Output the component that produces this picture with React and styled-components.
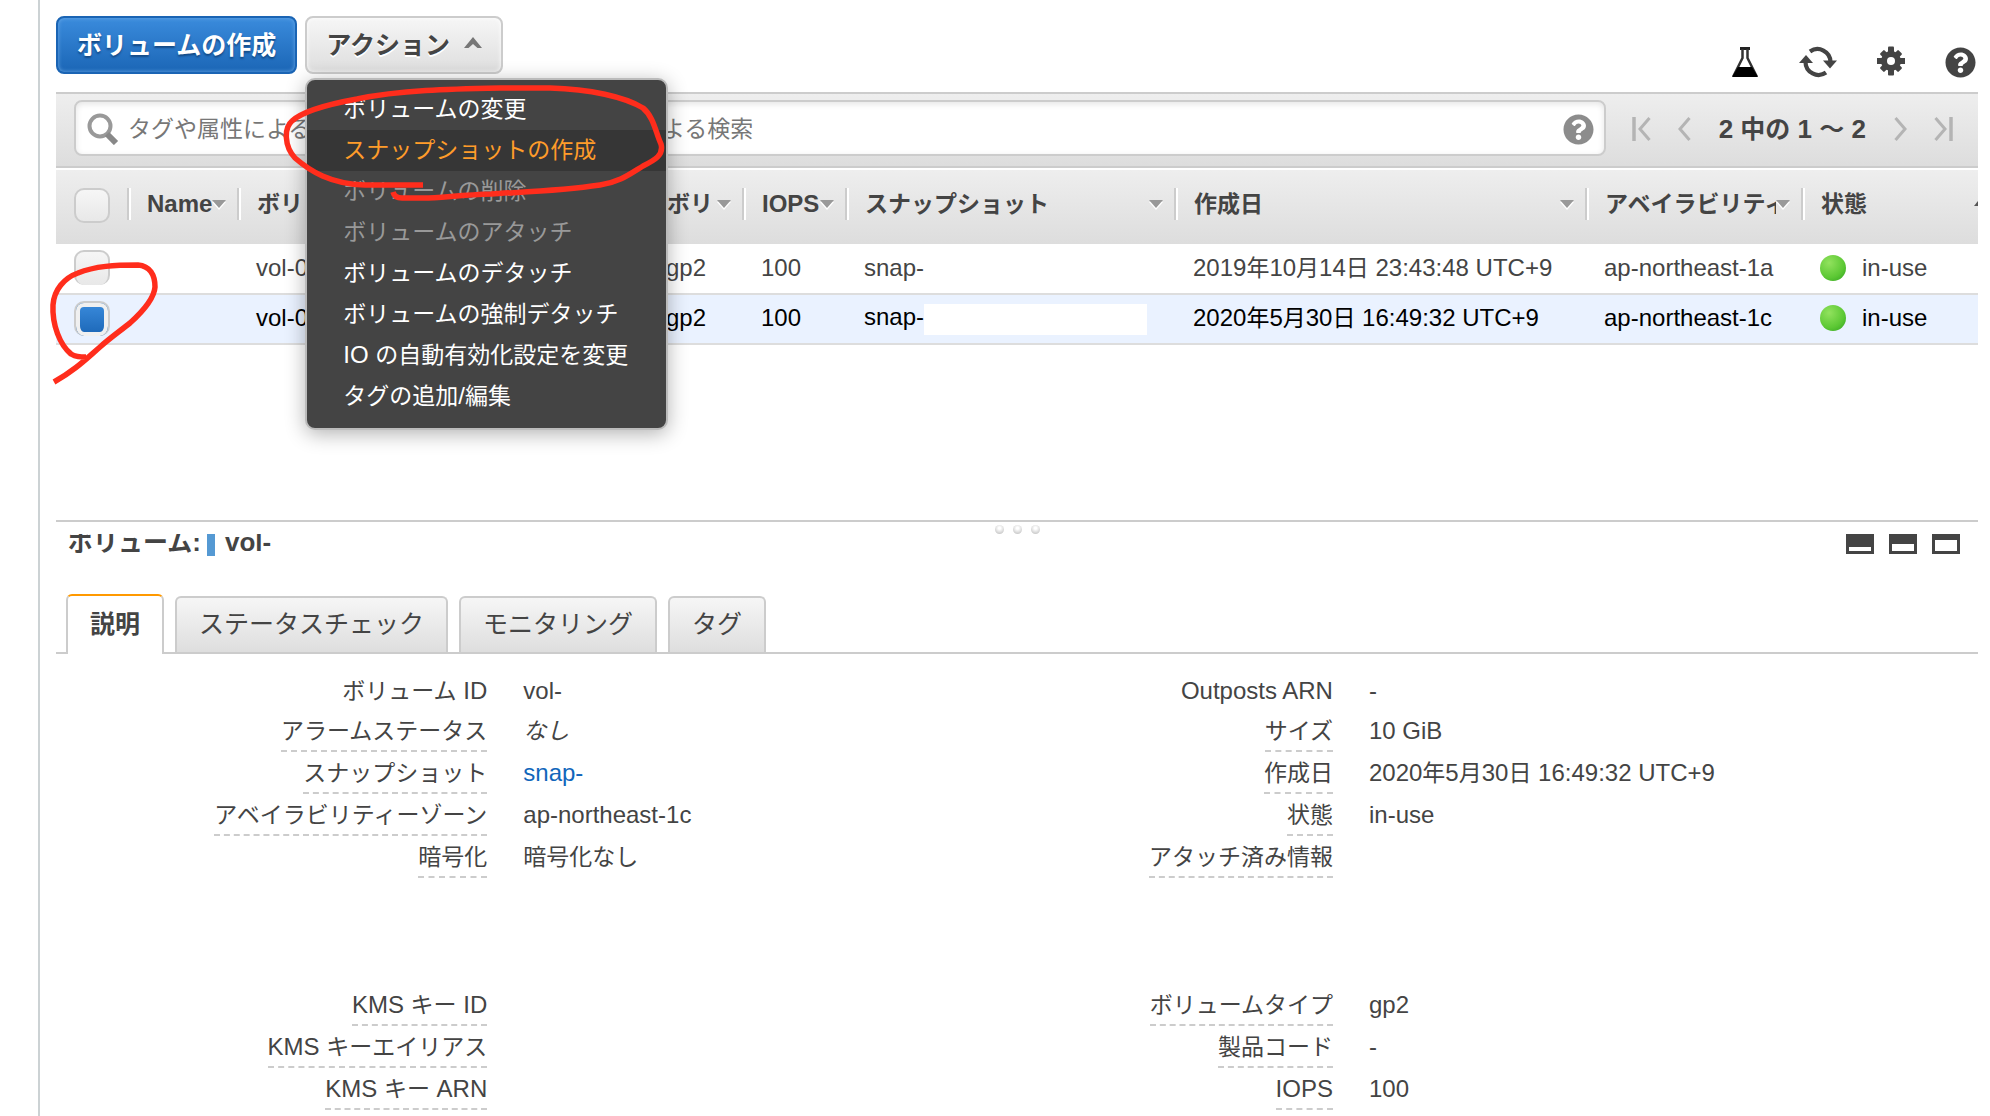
import React from "react";
import styled, { createGlobalStyle, css } from "styled-components";
import { FaQuestionCircle } from "react-icons/fa";

const GlobalStyle = createGlobalStyle`
  *, *::before, *::after { box-sizing: border-box; }
  body {
    margin: 0;
    background: #fff;
    color: #444;
    font-family: "Liberation Sans", "Noto Sans CJK JP", sans-serif;
    font-size: 24px;
  }
  button, input { font-family: inherit; }
`;

const Ja = styled.span`
  font-size: ${(p) => (p.$large ? 25 : 23)}px;
`;

/* Kana and kanji are set one pixel smaller than the Latin text beside them. */
function Text({ children, large }) {
  return children
    .split(/([\u3000-\u9fff\uff00-\uffef]+)/)
    .filter(Boolean)
    .map((run, i) =>
      /[\u3000-\u9fff\uff00-\uffef]/.test(run) ? (
        <Ja key={i} $large={large}>{run}</Ja>
      ) : (
        run
      )
    );
}

const Page = styled.div`
  position: relative;
  min-height: 100vh;
  padding-left: 38px;
  overflow: hidden;
`;

const Main = styled.main`
  min-height: 100vh;
  padding: 0 12px 0 16px;
  border-left: 2px solid #ccd2d4;
`;

const Toolbar = styled.header`
  display: flex;
  justify-content: space-between;
  height: 92px;
  padding-top: 16px;
`;

const ButtonGroup = styled.div`
  display: flex;
  gap: 8px;
`;

const Button = styled.button`
  display: flex;
  align-items: center;
  gap: 14px;
  height: 58px;
  padding: 0 19px 4px;
  border: 2px solid #ccc;
  border-radius: 8px;
  background: linear-gradient(#f6f6f6, #dedede);
  box-shadow: inset 0 0 4px #fff;
  color: #444;
  font-size: 26px;
  font-weight: bold;
  text-shadow: 0 2px 0 #fff;
  ${(p) =>
    p.$primary &&
    css`
      border-color: #1a64b4;
      background: linear-gradient(#3a8bdc, #1b66b6);
      box-shadow: inset 0 0 4px #6aa9e6;
      color: #fff;
      text-shadow: 0 2px 2px #134a86;
    `}
`;

const MenuAnchor = styled.div`
  position: relative;
`;

const Menu = styled.ul`
  position: absolute;
  z-index: 2;
  top: 62px;
  left: 0;
  width: 363px;
  margin: 0;
  padding: 9px 0 11px;
  border: 2px solid #bbb;
  border-radius: 10px;
  background: #444;
  box-shadow: 0 4px 20px rgba(0, 0, 0, 0.3);
  list-style: none;
`;

const MenuItem = styled.button`
  display: block;
  width: 100%;
  height: 41px;
  padding: 0 0 2px 36px;
  border: 0;
  background: ${(p) => (p.$active ? "#363636" : "transparent")};
  color: ${(p) => (p.$active ? "#ff9c2a" : "#fff")};
  font-size: 24px;
  line-height: 36px;
  text-align: left;
  white-space: nowrap;
  &:disabled { color: #999; }
`;

const Tools = styled.div`
  display: flex;
  align-items: flex-end;
  gap: 40px;
  height: 62px;
  padding-right: 2px;
`;

const IconButton = styled.button`
  display: flex;
  align-items: center;
  justify-content: center;
  padding: 0;
  border: 0;
  background: none;
  color: ${(p) => p.$color || "#444"};
`;

const FilterBar = styled.div`
  display: flex;
  align-items: flex-start;
  gap: 26px;
  height: 76px;
  padding: 6px 25px 0 18px;
  border: solid #ccc;
  border-width: 2px 0;
  background: linear-gradient(#eee, #ddd);
`;

const SearchBox = styled.label`
  display: flex;
  flex: 1;
  align-items: center;
  gap: 9px;
  height: 56px;
  padding: 2px 10px 0 11px;
  border: 2px solid #ccc;
  border-radius: 8px;
  background: #fff;
  box-shadow: inset 0 2px 6px #e4e4e4;
`;

const SearchInput = styled.input`
  flex: 1;
  min-width: 0;
  padding: 0;
  border: 0;
  outline: 0;
  background: transparent;
  font-size: 23px;
  &::placeholder { color: #777; opacity: 1; }
`;

const Pager = styled.nav`
  display: flex;
  align-items: center;
  gap: 26px;
  height: 58px;
`;

const PagerText = styled.span`
  margin: 0 2px;
  font-size: 26px;
  font-weight: bold;
  line-height: 36px;
  white-space: nowrap;
`;

const Table = styled.table`
  width: 100%;
  margin-top: 2px;
  border-collapse: collapse;
  table-layout: fixed;
`;

const HeadRow = styled.tr`
  height: 74px;
  background: linear-gradient(#eee, #ddd);
`;

const HeadCell = styled.th`
  padding: 18px 0 0;
  overflow: hidden;
  text-align: left;
  vertical-align: top;
`;

const HeadInner = styled.div`
  display: flex;
  align-items: center;
  height: 32px;
  padding: 0 ${(p) => (p.$last ? 0 : 11)}px 0 18px;
  border-left: 2px solid #ccc;
  box-shadow: inset 2px 0 0 #fff;
`;

const HeadLabel = styled.span`
  flex: 1;
  overflow: hidden;
  line-height: 32px;
  white-space: nowrap;
`;

const Row = styled.tr`
  height: 50px;
  border-bottom: 2px solid #ddd;
  background: ${(p) => (p.$selected ? "#eaf2ff" : "#fff")};
  color: ${(p) => (p.$selected ? "#000" : "#444")};
`;

const Cell = styled.td`
  padding: 0 0 2px 19px;
  line-height: 32px;
  white-space: nowrap;
`;

const CheckCell = styled.td`
  padding: ${(p) => (p.$head ? 18 : 6)}px 0 0 18px;
  line-height: 0;
  text-align: left;
  vertical-align: top;
`;

const Checkbox = styled.input`
  appearance: none;
  width: 36px;
  height: 35px;
  margin: 0;
  border: 2px solid #ccc;
  border-bottom-width: ${(p) => (p.$head ? 2 : 0)}px;
  border-radius: 10px;
  background: linear-gradient(#f6f6f6, #e8e8e8);
  &:checked {
    border-color: #ccc;
    box-shadow: inset 0 0 0 4px #f0f0f0;
    background: linear-gradient(#3a8bdc, #1b66b6);
  }
`;

const Redacted = styled.span`
  display: inline-block;
  width: 223px;
  height: 31px;
  background: #fff;
  vertical-align: middle;
`;

const Status = styled.span`
  display: flex;
  align-items: center;
  gap: 16px;
`;

const Dot = styled.span`
  width: 26px;
  height: 26px;
  border-radius: 50%;
  background: radial-gradient(circle at 35% 30%, #92e25e, #5cc834 60%, #2f9f20);
`;

const Splitter = styled.div`
  display: flex;
  justify-content: center;
  gap: 9px;
  height: 14px;
  margin-top: 175px;
  padding-top: 3px;
  border-top: 2px solid #ccc;
`;

const Grip = styled.span`
  width: 9px;
  height: 9px;
  border-radius: 50%;
  background: radial-gradient(circle at 50% 35%, #fff 15%, #ccc 75%);
`;

const PanelHead = styled.div`
  display: flex;
  justify-content: space-between;
  align-items: flex-start;
  height: 60px;
  padding: 0 18px 0 12px;
`;

const PanelTitle = styled.h2`
  display: flex;
  align-items: flex-start;
  height: 24px;
  margin: 0;
  overflow: hidden;
  font-size: 26px;
`;

const TitleText = styled.span`
  line-height: 16px;
`;

const Marker = styled.span`
  width: 8px;
  height: 22px;
  margin: 0 10px 0 6px;
  background: #5599d3;
`;

const WindowButtons = styled.div`
  display: flex;
  gap: 15px;
`;

const TabList = styled.div`
  display: flex;
  align-items: flex-end;
  gap: 11px;
  height: 60px;
  padding-left: 10px;
  border-bottom: 2px solid #ccc;
`;

const Tab = styled.button`
  height: 56px;
  padding: 0 22px 2px;
  border: 2px solid #ccc;
  border-bottom: 0;
  border-radius: 6px 6px 0 0;
  background: linear-gradient(#f6f6f6, #dedede);
  color: #444;
  font-size: 26px;
  line-height: 50px;
  ${(p) =>
    p.$active &&
    css`
      height: 60px;
      margin-bottom: -2px;
      border-top-color: #f90;
      background: #fff;
      font-weight: bold;
    `}
`;

const Details = styled.div`
  display: flex;
  padding-top: 18px;
`;

const DetailList = styled.dl`
  width: 44%;
  margin: 0;
`;

const DetailRow = styled.div`
  display: grid;
  grid-template-columns: 51% 1fr;
  align-items: start;
  column-gap: 36px;
  height: ${(p) => (p.$tall ? 148 : p.$plain ? 40 : 42)}px;
`;

const Term = styled.dt`
  justify-self: end;
  height: 40px;
  border-bottom: ${(p) => (p.$plain ? "0" : "2px dashed #ccc")};
  line-height: 38px;
  white-space: nowrap;
`;

const Value = styled.dd`
  margin: 0;
  line-height: 38px;
  white-space: nowrap;
`;

const Link = styled.a`
  color: #1166bb;
  text-decoration: none;
`;

const Marks = styled.svg`
  position: absolute;
  z-index: 3;
  top: 0;
  left: 0;
  pointer-events: none;
`;

const Svg = ({ w, h, children }) => (
  <svg width={w} height={h} viewBox={`0 0 ${w} ${h}`} aria-hidden="true">{children}</svg>
);

const FlaskIcon = () => (
  <Svg w={28} h={31}>
    <path d="M9 1.500h10" stroke="#222" strokeWidth="3" />
    <path d="M11.500 2v9L3 28h22L16.500 11V2" fill="none" stroke="#333" strokeWidth="2.500" />
    <path d="M7 20h14l6 10H1z" fill="#000" />
  </Svg>
);

const RefreshIcon = () => (
  <Svg w={38} h={32}>
    <path d="M11 5.500A13 13 0 0 1 31.500 16M27 26.500A13 13 0 0 1 6.500 16" fill="none" stroke="#444" strokeWidth="4.200" />
    <path d="M0 17L7 9l7 8zM24 14.500h14l-7 8z" fill="#444" />
  </Svg>
);

const GearIcon = () => (
  <Svg w={28} h={32}>
    <g fill="#444">
      {[0, 45, 90, 135].map((a) => (
        <rect key={a} x="11" y={a % 90 ? 2 : 0.5} width="6" height={a % 90 ? 26 : 29} rx="1" transform={`rotate(${a} 14 15)`} />
      ))}
      <circle cx="14" cy="15" r="10" />
    </g>
    <circle cx="14" cy="15" r="4" fill="#fff" />
  </Svg>
);

const SearchIcon = () => (
  <Svg w={32} h={32}>
    <circle cx="13" cy="13" r="10.500" fill="none" stroke="#999" strokeWidth="4" />
    <path d="M20 21l9 9" stroke="#888" strokeWidth="6" />
  </Svg>
);

const PageIcon = ({ back, end }) => (
  <Svg w={end ? 19 : 14} h={24}>
    <g transform={back ? `translate(${end ? 19 : 14} 0) scale(-1 1)` : undefined} fill="none" stroke="#b4b4b4" strokeWidth="3">
      <path d="M1.500 1l9.500 11-9.500 11" />
      {end && <path d="M17 0v24" strokeWidth="3.500" />}
    </g>
  </Svg>
);

const SortIcon = () => (
  <Svg w={14} h={12}>
    <path d="M0 4h14L7 12z" fill="#fff" />
    <path d="M0 2h14L7 10z" fill="#999" />
  </Svg>
);

const EdgeIcon = () => (
  <Svg w={4} h={6}>
    <path d="M0 5L4 0v5z" fill="#555" />
  </Svg>
);

const CaretIcon = () => (
  <Svg w={18} h={12}>
    <path d="M0 11L9 0l9 11h-4.500L9 7l-4.500 4z" fill="#777" />
  </Svg>
);

const WindowIcon = ({ top }) => (
  <Svg w={28} h={21}>
    <path fillRule="evenodd" fill="#444" d={`M0 0h28v20H0zM3 ${top}v${17 - top}h22V${top}z`} />
  </Svg>
);

const menuItems = [
  { label: "ボリュームの変更" },
  { label: "スナップショットの作成", active: true },
  { label: "ボリュームの削除", disabled: true },
  { label: "ボリュームのアタッチ", disabled: true },
  { label: "ボリュームのデタッチ" },
  { label: "ボリュームの強制デタッチ" },
  { label: "IO の自動有効化設定を変更" },
  { label: "タグの追加/編集" },
];

const columns = [
  { key: "name", label: "Name", width: 110 },
  { key: "id", label: "ボリ", width: 410 },
  { key: "type", label: "ボリ", width: 95 },
  { key: "iops", label: "IOPS", width: 103 },
  { key: "snapshot", label: "スナップショット", width: 329 },
  { key: "created", label: "作成日", width: 411 },
  { key: "zone", label: "アベイラビリティ", width: 216 },
  { key: "state", label: "状態" },
];

const volumes = [
  { created: "2019年10月14日 23:43:48 UTC+9", zone: "ap-northeast-1a" },
  { created: "2020年5月30日 16:49:32 UTC+9", zone: "ap-northeast-1c", selected: true },
];

const details = [
  [
    { term: "ボリューム ID", value: "vol-", plain: true },
    { term: "アラームステータス", value: <i><Text>なし</Text></i> },
    { term: "スナップショット", value: <Link href="#snapshot">snap-</Link> },
    { term: "アベイラビリティーゾーン", value: "ap-northeast-1c" },
    { term: "暗号化", value: "暗号化なし", tall: true },
    { term: "KMS キー ID" },
    { term: "KMS キーエイリアス" },
    { term: "KMS キー ARN" },
  ],
  [
    { term: "Outposts ARN", value: "-", plain: true },
    { term: "サイズ", value: "10 GiB" },
    { term: "作成日", value: "2020年5月30日 16:49:32 UTC+9" },
    { term: "状態", value: "in-use" },
    { term: "アタッチ済み情報", tall: true },
    { term: "ボリュームタイプ", value: "gp2" },
    { term: "製品コード", value: "-" },
    { term: "IOPS", value: "100" },
  ],
];

export default function App() {
  return (
    <Page>
      <GlobalStyle />
      <Main>
        <Toolbar>
          <ButtonGroup>
            <Button $primary><span><Text large>ボリュームの作成</Text></span></Button>
            <MenuAnchor>
              <Button aria-expanded="true"><span><Text large>アクション</Text></span><CaretIcon /></Button>
              <Menu>
                {menuItems.map((item) => (
                  <li key={item.label}>
                    <MenuItem $active={item.active} disabled={item.disabled}><Text>{item.label}</Text></MenuItem>
                  </li>
                ))}
              </Menu>
            </MenuAnchor>
          </ButtonGroup>
          <Tools>
            <IconButton aria-label="実験"><FlaskIcon /></IconButton>
            <IconButton aria-label="更新"><RefreshIcon /></IconButton>
            <IconButton aria-label="設定"><GearIcon /></IconButton>
            <IconButton aria-label="ヘルプ"><FaQuestionCircle size={31} /></IconButton>
          </Tools>
        </Toolbar>

        <FilterBar>
          <SearchBox>
            <SearchIcon />
            <SearchInput type="text" aria-label="検索" placeholder="タグや属性によるフィルター、または キーワードによる検索" />
            <IconButton $color="#8c8c8c" aria-label="検索のヘルプ"><FaQuestionCircle size={31} /></IconButton>
          </SearchBox>
          <Pager>
            <IconButton aria-label="最初"><PageIcon back end /></IconButton>
            <IconButton aria-label="前"><PageIcon back /></IconButton>
            <PagerText><Text large>2 中の 1 ～ 2</Text></PagerText>
            <IconButton aria-label="次"><PageIcon /></IconButton>
            <IconButton aria-label="最後"><PageIcon end /></IconButton>
          </Pager>
        </FilterBar>

        <Table>
          <colgroup>
            <col width="71" />
            {columns.map((c) => <col key={c.key} width={c.width} />)}
          </colgroup>
          <thead>
            <HeadRow>
              <CheckCell as="th" $head>
                <Checkbox $head type="checkbox" aria-label="すべて選択" />
              </CheckCell>
              {columns.map((c) => (
                <HeadCell key={c.key}>
                  <HeadInner $last={!c.width}>
                    <HeadLabel><Text>{c.label}</Text></HeadLabel>
                    {c.width ? <SortIcon /> : <EdgeIcon />}
                  </HeadInner>
                </HeadCell>
              ))}
            </HeadRow>
          </thead>
          <tbody>
            {volumes.map((v) => (
              <Row key={v.zone} $selected={v.selected}>
                <CheckCell>
                  <Checkbox type="checkbox" aria-label={v.zone} defaultChecked={v.selected} />
                </CheckCell>
                <Cell />
                <Cell>vol-0</Cell>
                <Cell>gp2</Cell>
                <Cell>100</Cell>
                <Cell>snap-{v.selected && <Redacted />}</Cell>
                <Cell><Text>{v.created}</Text></Cell>
                <Cell>{v.zone}</Cell>
                <Cell><Status><Dot />in-use</Status></Cell>
              </Row>
            ))}
          </tbody>
        </Table>

        <Splitter><Grip /><Grip /><Grip /></Splitter>
        <PanelHead>
          <PanelTitle>
            <TitleText><Text large>ボリューム:</Text></TitleText>
            <Marker />
            <TitleText>vol-</TitleText>
          </PanelTitle>
          <WindowButtons>
            <IconButton aria-label="最小化"><WindowIcon top={13} /></IconButton>
            <IconButton aria-label="半分"><WindowIcon top={10} /></IconButton>
            <IconButton aria-label="最大化"><WindowIcon top={6} /></IconButton>
          </WindowButtons>
        </PanelHead>

        <TabList role="tablist">
          {["説明", "ステータスチェック", "モニタリング", "タグ"].map((t, i) => (
            <Tab key={t} role="tab" aria-selected={i === 0} $active={i === 0}><Text large>{t}</Text></Tab>
          ))}
        </TabList>

        <Details>
          {details.map((list, i) => (
            <DetailList key={i}>
              {list.map((d) => (
                <DetailRow key={d.term} $plain={d.plain} $tall={d.tall}>
                  <Term $plain={d.plain}><Text>{d.term}</Text></Term>
                  <Value>{typeof d.value === "string" ? <Text>{d.value}</Text> : d.value}</Value>
                </DetailRow>
              ))}
            </DetailList>
          ))}
        </Details>
      </Main>

      <Marks width="680" height="400" viewBox="0 0 680 400" fill="none" stroke="#ff2d1c" strokeWidth="5.500" aria-hidden="true">
        <path d="M423 185H365C330 184 310 171 295 158C284 146 284 128 292 121C304 110 335 103 357 99C400 90 450 89 500 88H550C590 89 625 97 643 108C654 117 656 134 661 144C664 155 655 160 643 166C630 174 620 182 600 185C560 191 520 192 491 194C460 195 440 198 424 198H402C397 198 394 196 393 192" />
        <path d="M86 357C80 357 76 357 71 354C60 345 52 325 53 305C54 290 64 278 78 273C95 266 115 265 138 265C150 266 155 275 155 287C154 300 140 314 130 323C120 331 110 338 100 347C85 360 75 370 54 382" />
      </Marks>
    </Page>
  );
}
